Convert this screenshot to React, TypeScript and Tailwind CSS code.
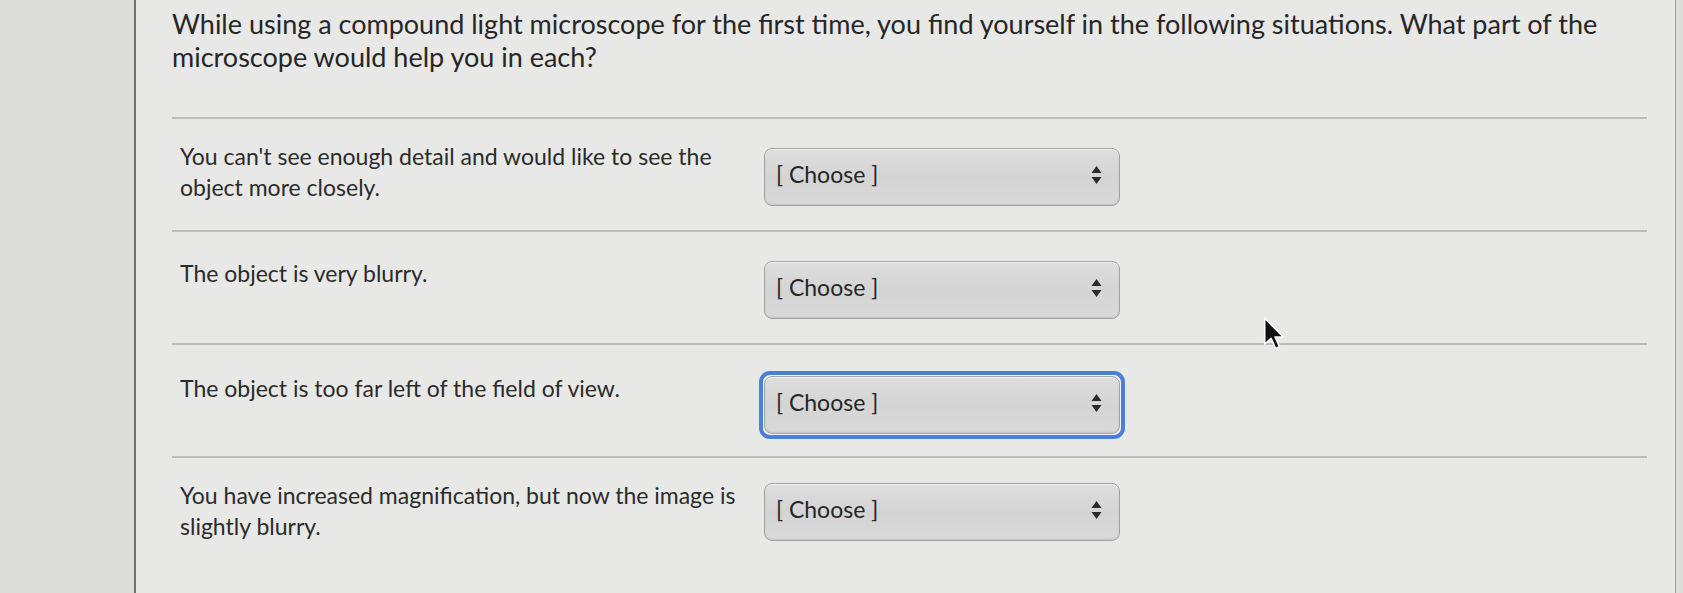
const rows = [
  { text: "You can't see enough detail and would like to see the object more closely.", pad: 'pt-[22px]', focused: false },
  { text: 'The object is very blurry.', pad: 'pt-[26px]', focused: false },
  { text: 'The object is too far left of the field of view.', pad: 'pt-[28px]', focused: true },
  { text: 'You have increased magnification, but now the image is slightly blurry.', pad: 'pt-[22px]', focused: false },
]

function UpDownArrows() {
  return (
    <svg width="11" height="20" viewBox="0 0 11 20" className="shrink-0">
      <path d="M5.5 1 L10.5 8 L0.5 8 Z" fill="#2a2a2a" />
      <path d="M0.5 12 L10.5 12 L5.5 19 Z" fill="#2a2a2a" />
    </svg>
  )
}

function ChooseSelect({ focused }: { focused: boolean }) {
  return (
    <div
      className={
        focused
          ? 'rounded-[11px] border-[4px] border-[#4c80d6] p-px bg-[#f4f4f4] -m-[5px]'
          : ''
      }
    >
      <div className="flex h-[58px] w-[356px] items-center justify-between rounded-[8px] border border-[#a3a3a3] bg-gradient-to-b from-[#dedede] via-[#d4d4d4] to-[#d9d9d9] pl-[11px] pr-[17px] pb-[5px] shadow-[inset_0_1px_0_#f2f2f2,inset_0_-1px_2px_#c4c4c4]">
        <span className="text-[23px] text-[#262626]">[ Choose ]</span>
        <UpDownArrows />
      </div>
    </div>
  )
}

function Cursor() {
  return (
    <svg width="26" height="36" viewBox="0 0 20 28" className="absolute left-[1262px] top-[317px]">
      <path
        d="M2 1 L2 21 L7 16.5 L10.5 24.5 L13.5 23 L10 15.5 L16.5 15.5 Z"
        fill="#111"
        stroke="#fff"
        strokeWidth="1.2"
        strokeLinejoin="round"
      />
    </svg>
  )
}

export default function App() {
  return (
    <div className="relative flex h-[593px] w-[1683px] overflow-hidden bg-[#dcdcda] font-['Lato',sans-serif]">
      <div className="w-[134px] shrink-0" />
      <div className="w-[1542px] shrink-0 border-l-2 border-r border-l-[#707070] border-r-[#9c9c9c] bg-[#e8e8e6] pl-[36px] pr-[28px]">
        <div className="pt-[7px] pr-[40px] text-[27px] leading-[33px] text-[#262626]">
          While using a compound light microscope for the first time, you find yourself in the following situations. What part of the microscope would help you in each?
        </div>
        <div className="mt-[44px]">
          {rows.map((row, i) => (
            <div key={i} className={`flex h-[113px] border-t-2 border-[#bcbcbc] pl-[8px] ${row.pad}`}>
              <div className="w-[572px] shrink-0 text-[23px] leading-[31px] text-[#2b2b2b]">{row.text}</div>
              <div className={`ml-[12px] ${i === 0 ? 'mt-[7px]' : 'mt-[3px]'}`}>
                <ChooseSelect focused={row.focused} />
              </div>
            </div>
          ))}
        </div>
      </div>
      <Cursor />
    </div>
  )
}
